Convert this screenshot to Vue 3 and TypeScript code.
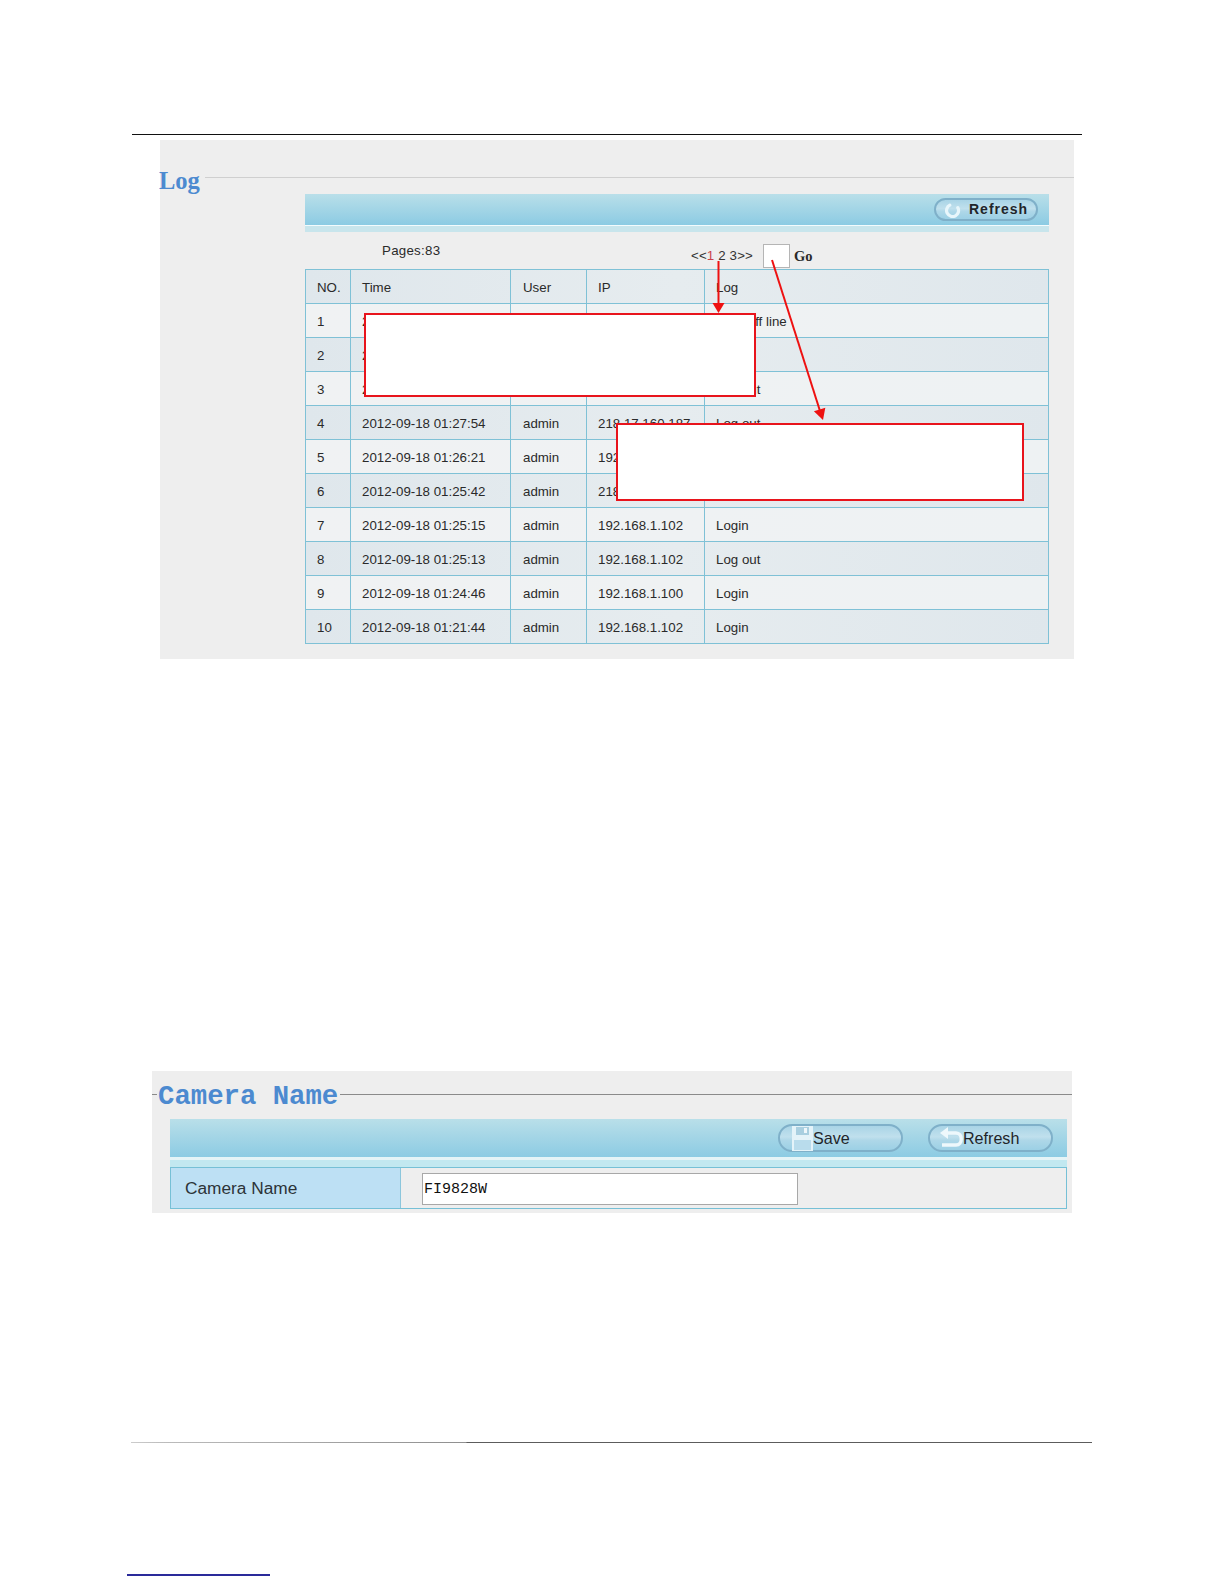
<script setup lang="ts">
interface LogRow {
  no: number
  time: string
  user: string
  ip: string
  log: string
}

const rows: LogRow[] = [
  { no: 1, time: '2012-09-18 01:30:40', user: 'admin', ip: '192.168.1.102', log: 'User off line' },
  { no: 2, time: '2012-09-18 01:29:18', user: 'admin', ip: '192.168.1.102', log: 'Login' },
  { no: 3, time: '2012-09-18 01:28:02', user: 'admin', ip: '192.168.1.102', log: 'Log out' },
  { no: 4, time: '2012-09-18 01:27:54', user: 'admin', ip: '218.17.160.187', log: 'Log out' },
  { no: 5, time: '2012-09-18 01:26:21', user: 'admin', ip: '192.168.1.102', log: 'Login' },
  { no: 6, time: '2012-09-18 01:25:42', user: 'admin', ip: '218.17.160.187', log: 'Login' },
  { no: 7, time: '2012-09-18 01:25:15', user: 'admin', ip: '192.168.1.102', log: 'Login' },
  { no: 8, time: '2012-09-18 01:25:13', user: 'admin', ip: '192.168.1.102', log: 'Log out' },
  { no: 9, time: '2012-09-18 01:24:46', user: 'admin', ip: '192.168.1.100', log: 'Login' },
  { no: 10, time: '2012-09-18 01:21:44', user: 'admin', ip: '192.168.1.102', log: 'Login' }
]
</script>

<template>
  <div class="page">
    <div class="top-rule"></div>

    <section class="log-panel">
      <div class="log-head">
        <h2 class="log-title">Log</h2>
        <div class="log-line"></div>
      </div>
      <div class="log-body">
        <div class="bar log-bar">
          <button class="pill pill-bold" type="button">
            <svg class="spin-icon" viewBox="0 0 20 20" aria-hidden="true">
              <path d="M6 4 A7.5 7.5 0 1 0 16 7" fill="none" stroke="#e8f6fb" stroke-width="4" stroke-linecap="round" />
            </svg>
            <span>Refresh</span>
          </button>
        </div>
        <div class="strip log-strip"></div>
        <div class="pager-row">
          <span class="pages">Pages:83</span>
          <span class="pager">&lt;&lt;<em>1</em> 2 3&gt;&gt;</span>
          <span class="go-box"></span>
          <span class="go">Go</span>
        </div>
        <table class="log-table">
          <colgroup>
            <col class="c-no" />
            <col class="c-time" />
            <col class="c-user" />
            <col class="c-ip" />
            <col class="c-log" />
          </colgroup>
          <thead>
            <tr>
              <th>NO.</th>
              <th>Time</th>
              <th class="user-cell">User</th>
              <th>IP</th>
              <th>Log</th>
            </tr>
          </thead>
          <tbody>
            <tr v-for="row in rows" :key="row.no">
              <td>{{ row.no }}</td>
              <td>{{ row.time }}</td>
              <td class="user-cell">{{ row.user }}</td>
              <td>{{ row.ip }}</td>
              <td>{{ row.log }}</td>
            </tr>
          </tbody>
        </table>
      </div>
    </section>

    <section class="cam-panel">
      <div class="cam-head">
        <div class="cam-tick"></div>
        <h2 class="cam-title">Camera Name</h2>
        <div class="cam-line"></div>
      </div>
      <div class="cam-body">
        <div class="bar cam-bar">
          <button class="pill pill-save" type="button">
            <svg class="save-icon" viewBox="0 0 21 25" aria-hidden="true">
              <path d="M0 0H21V25H0Z" fill="#e4f3f9" />
              <path d="M4 1H17V9H4Z" fill="#a9cfe0" />
              <path d="M12 2H15V7H12Z" fill="#eef7fb" />
              <path d="M2 14H19V24H2Z" fill="#b9dcec" />
            </svg>
            <span>Save</span>
          </button>
          <button class="pill pill-back" type="button">
            <svg class="back-icon" viewBox="0 0 24 22" aria-hidden="true">
              <path d="M7 6H17C24 6 24 18 17 18H3" fill="none" stroke="#eef8fc" stroke-width="3.4" />
              <path d="M9 0V12L1 6Z" fill="#eef8fc" />
            </svg>
            <span>Refresh</span>
          </button>
        </div>
        <div class="cam-white"></div>
        <div class="cam-strip"></div>
        <div class="cam-row">
          <div class="cam-label">Camera Name</div>
          <div class="cam-value">
            <div class="cam-input">FI9828W</div>
          </div>
        </div>
      </div>
    </section>

    <div class="foot-rule"></div>
    <div class="foot-link"></div>

    <div class="note note-a"></div>
    <div class="note note-b"></div>
    <svg class="arrows" viewBox="0 0 1224 1584" aria-hidden="true">
      <line x1="718.5" y1="261" x2="718.5" y2="304" stroke="#ee1111" stroke-width="2" />
      <polygon points="712.5,303 724.5,303 718.5,313" fill="#ee1111" />
      <line x1="772" y1="260" x2="820" y2="411" stroke="#ee1111" stroke-width="2" />
      <polygon points="825.3,407.7 813.9,411.3 823,420" fill="#ee1111" />
    </svg>
  </div>
</template>

<style>
html,
body {
  background: #ffffff;
}
</style>

<style scoped>
.page {
  position: relative;
  width: 1224px;
  height: 1584px;
  overflow: hidden;
  background: #ffffff;
  font-family: "Liberation Sans", Arial, sans-serif;
  color: #2a2a2a;
}

.top-rule {
  width: 950px;
  height: 1px;
  margin: 134px 0 0 132px;
  background: #111111;
}

.log-panel {
  width: 914px;
  height: 519px;
  margin: 5px 0 0 160px;
  background: #eeeeee;
}

.log-head {
  display: flex;
  height: 54px;
}

.log-title {
  margin: 27px 0 0 -1px;
  font-family: "Liberation Serif", "Times New Roman", serif;
  font-size: 24.5px;
  line-height: 28px;
  font-weight: 700;
  color: #4c8ad0;
}

.log-line {
  flex: 1;
  height: 1px;
  margin: 37px 0 0 5px;
  background: #cfcfcf;
}

.log-body {
  width: 744px;
  margin-left: 145px;
}

.bar {
  display: flex;
  align-items: center;
  justify-content: flex-end;
  background: linear-gradient(#b9dfe9, #8ccbe3);
}

.log-bar {
  height: 31px;
  padding-right: 11px;
  box-sizing: border-box;
}

.strip {
  border-top: 1px solid #f3fbfd;
}

.log-strip {
  height: 6px;
  background: #c8e5ec;
}

.pill {
  display: flex;
  align-items: center;
  padding: 0;
  font-family: "Liberation Sans", Arial, sans-serif;
  color: #1f252a;
  background: linear-gradient(#a9d4e6 0%, #c0e0ed 45%, #aed7e8 60%, #9cd0e5 100%);
  border: 2px solid #7fb0c9;
  border-radius: 999px;
  box-sizing: border-box;
}

.pill-bold {
  width: 104px;
  height: 23px;
  font-size: 14px;
  font-weight: 700;
  letter-spacing: 1px;
}

.pill-bold span {
  margin-top: -2px;
}

.spin-icon {
  width: 16px;
  height: 16px;
  margin: 0 8px 0 9px;
}

.pager-row {
  display: flex;
  height: 37px;
  font-size: 13.3px;
}

.pages {
  width: 57px;
  margin: 11px 0 0 77px;
  line-height: 16px;
  letter-spacing: 0.02em;
  white-space: nowrap;
}

.pager {
  width: 63px;
  margin: 16px 0 0 252px;
  line-height: 16px;
  letter-spacing: 0.15px;
  color: #333333;
  white-space: nowrap;
}

.pager em {
  font-style: normal;
  color: #c9404a;
}

.go-box {
  width: 27px;
  height: 24px;
  margin: 12px 0 0 9px;
  box-sizing: border-box;
  background: #ffffff;
  border: 1px solid #b5b5b5;
}

.go {
  margin: 16px 0 0 4px;
  font-family: "Liberation Serif", "Times New Roman", serif;
  font-size: 14.5px;
  font-weight: 700;
  line-height: 16px;
}

.log-table {
  width: 743px;
  table-layout: fixed;
  border-collapse: collapse;
  font-size: 13.3px;
}

.c-no {
  width: 45px;
}

.c-time {
  width: 160px;
}

.c-user {
  width: 76px;
}

.c-ip {
  width: 118px;
}

.c-log {
  width: 344px;
}

.log-table th,
.log-table td {
  height: 34px;
  padding: 1px 0 0 11px;
  box-sizing: border-box;
  border: 1px solid #7fc1d6;
  font-weight: 400;
  text-align: left;
  white-space: nowrap;
  overflow: hidden;
}

.log-table .user-cell {
  padding-left: 12px;
}

.log-table thead tr,
.log-table tbody tr:nth-child(even) {
  background: linear-gradient(90deg, #dfe7ec, #e6ecef 50%, #dfe7ec);
}

.log-table tbody tr:nth-child(odd) {
  background: linear-gradient(90deg, #f0f2f3, #eef2f3);
}

.cam-panel {
  width: 920px;
  height: 142px;
  margin: 412px 0 0 152px;
  background: #eeeeee;
}

.cam-head {
  display: flex;
  height: 48px;
}

.cam-tick {
  width: 5px;
  height: 1px;
  margin-top: 23px;
  background: #8a8a8a;
}

.cam-title {
  margin: 11px 0 0 1px;
  font-family: "Liberation Mono", "Courier New", monospace;
  font-size: 27.3px;
  line-height: 30px;
  font-weight: 700;
  color: #4c8ad0;
  white-space: nowrap;
}

.cam-line {
  flex: 1;
  height: 1px;
  margin: 23px 0 0 2px;
  background: #8a8a8a;
}

.cam-body {
  width: 897px;
  margin-left: 18px;
}

.cam-bar {
  height: 38px;
  gap: 25px;
  padding-right: 14px;
  box-sizing: border-box;
}

.cam-white {
  height: 3px;
  background: #e4f4f7;
}

.cam-strip {
  height: 7px;
  background: #c2e8f0;
}

.pill-save,
.pill-back {
  width: 125px;
  height: 28px;
  font-size: 16.1px;
}

.pill-save span,
.pill-back span {
  margin-top: 1px;
}

.save-icon {
  width: 21px;
  height: 25px;
  margin-left: 12px;
}

.back-icon {
  width: 24px;
  height: 22px;
  margin: 0 0 0 9px;
}

.cam-row {
  display: flex;
  height: 42px;
  box-sizing: border-box;
  border: 1px solid #76c0d6;
}

.cam-label {
  display: flex;
  align-items: center;
  width: 230px;
  padding-left: 14px;
  box-sizing: border-box;
  border-right: 1px solid #8cc6dc;
  background: #bde0f4;
  font-size: 17.3px;
  color: #2c3338;
}

.cam-value {
  flex: 1;
  padding: 5px 0 0 21px;
  background: #eeeeee;
}

.cam-input {
  width: 376px;
  height: 32px;
  padding-left: 1px;
  box-sizing: border-box;
  background: #ffffff;
  border: 1px solid #a8a8a8;
  font-family: "Liberation Mono", "Courier New", monospace;
  font-size: 15px;
  line-height: 32px;
  color: #111111;
}

.foot-rule {
  width: 961px;
  height: 1px;
  margin: 229px 0 0 131px;
  background: linear-gradient(90deg, #cccccc 0, #bbbbbb 35px, #8f8f8f 335px, #5c5c5c 336px, #5c5c5c 100%);
}

.foot-link {
  width: 143px;
  height: 2px;
  margin: 131px 0 0 127px;
  background: #2a2a9a;
}

.note {
  position: absolute;
  box-sizing: border-box;
  background: #ffffff;
  border: 2px solid #e8141c;
}

.note-a {
  left: 364px;
  top: 313px;
  width: 392px;
  height: 84px;
}

.note-b {
  left: 616px;
  top: 423px;
  width: 408px;
  height: 78px;
}

.arrows {
  position: absolute;
  left: 0;
  top: 0;
  width: 1224px;
  height: 1584px;
  pointer-events: none;
}
</style>
